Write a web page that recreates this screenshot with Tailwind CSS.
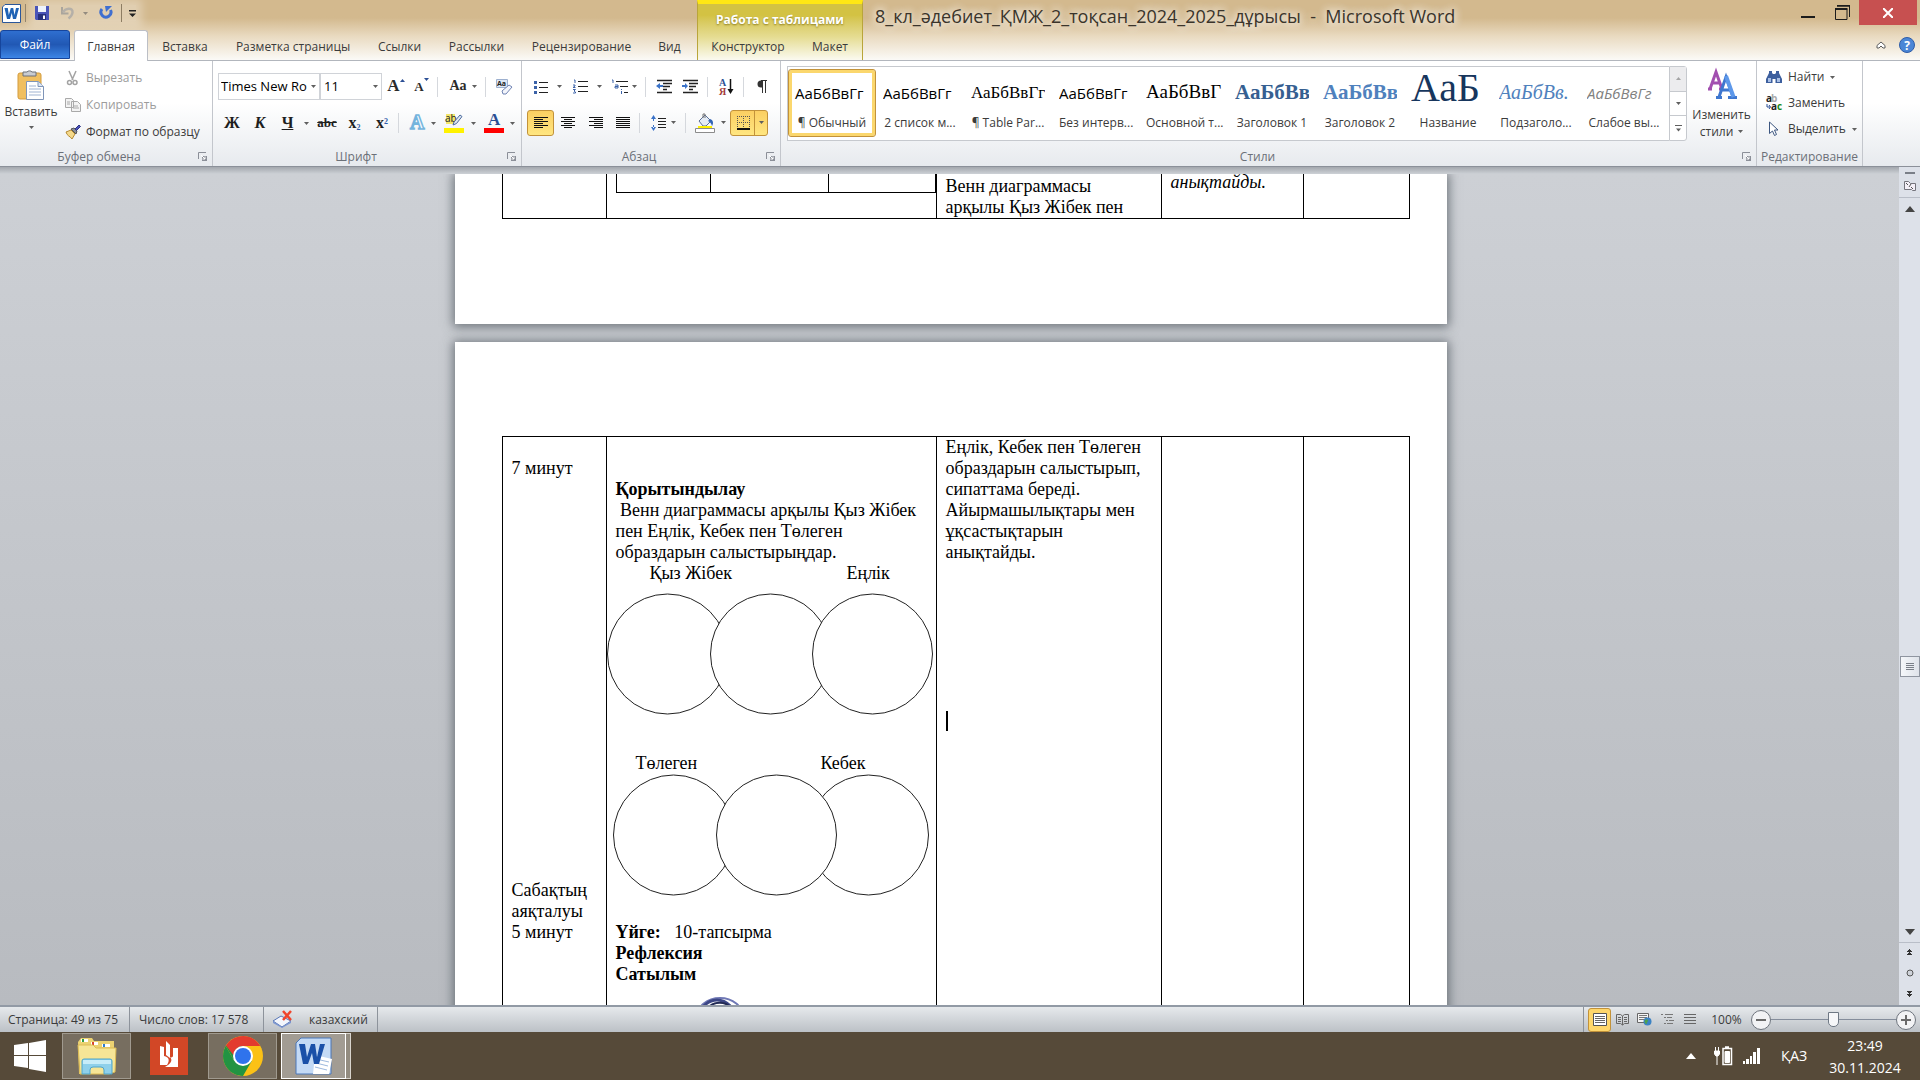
<!DOCTYPE html>
<html lang="ru">
<head>
  <meta charset="utf-8">
  <title>8_кл_әдебиет_ҚМЖ_2_тоқсан_2024_2025_дұрысы - Microsoft Word</title>
  <script src="https://cdn.jsdelivr.net/npm/@tailwindcss/browser@4"></script>
</head>
<body class="h-screen flex flex-col overflow-hidden font-['Open_Sans','Noto_Sans',sans-serif] text-xs text-[#3b3b3b] bg-[#c4c8cd]">

  <!-- shared glyphs -->
  <svg class="hidden">
    <symbol id="caret" viewBox="0 0 5 3"><path d="M0 0h5L2.500 3z" fill="#5f5f5f"/></symbol>
    <symbol id="launcher" viewBox="0 0 9 9"><path d="M.5 7V.5H8" fill="none" stroke="#8b8f98"/><path d="M4 4h5v5H4z" fill="#8b8f98"/><path d="M3 3l4 4M7 4.500V7H4.500" stroke="#fff" fill="none"/></symbol>
    <symbol id="word" viewBox="0 0 19 19"><path d="M3 .5h15.500v18H.5V3z" fill="#fff" stroke="#2b579a"/><path d="M2.500 4h3.300l1 7 2-7h2.400l1.300 7L14 4h3l-3 11h-3L9.800 9 8 15H5z" fill="#1f63b5"/></symbol>
  </svg>

  <!-- title bar and tabs -->
  <header class="flex h-[61px] shrink-0 border-b border-[#b2b6bd] bg-linear-to-b from-[#d3b98e] from-30% via-[#e9dac0] via-60% to-[#fbfaf7]">
    <div class="w-[697px] flex flex-col shrink-0">
      <div class="h-[31px] flex items-center pb-1">
        <svg class="size-[19px] ml-[2px]"><use href="#word"/></svg>
        <i class="w-px h-[18px] bg-[#8d7d63] ml-1"></i>
        <div class="flex items-center h-4 ml-[9px] bg-white/30 shadow-[0_0_8px_6px_rgba(255,255,255,.3)]">
          <button aria-label="Сохранить">
            <svg class="size-[14px]" viewBox="0 0 14 14"><path d="M0 0h14v14H1L0 13z" fill="#4a55b8"/><path d="M3 0h8v6H3z" fill="#eef3fb"/><path d="M3 8h8v6H3z" fill="#26307c"/><path d="M8 9.500h2V13H8z" fill="#fff"/></svg>
          </button>
          <button aria-label="Отменить" class="flex items-center ml-3">
            <svg class="w-[14px] h-[14px]" viewBox="0 0 14 14"><path d="M1 1v6.500h6.500" fill="none" stroke="#aaa59c" stroke-width="2"/><path d="M2 6.500C4 2 12 1 11.500 6.500 11.300 9.500 9.500 11 7.500 12.500" fill="none" stroke="#b5b0a8" stroke-width="2.500"/></svg>
            <svg class="w-[5px] h-[3px] ml-2 opacity-60"><use href="#caret"/></svg>
          </button>
          <button aria-label="Вернуть" class="ml-[11px]">
            <svg class="w-[14px] h-[14px]" viewBox="0 0 14 14"><path d="M3 3a5 5 0 1 0 8.500 1" fill="none" stroke="#3f6fd0" stroke-width="3"/><path d="M6 0h7L7 6z" fill="#3f6fd0"/></svg>
          </button>
          <i class="w-px h-[18px] bg-[#8d7d63] ml-2"></i>
          <button aria-label="Настройка панели быстрого доступа" class="ml-[7px]">
            <svg class="w-[7px] h-[7px]" viewBox="0 0 7 7"><path d="M0 0h7v1.500H0zM0 3.500h7L3.500 7z" fill="#222"/></svg>
          </button>
        </div>
      </div>
      <nav class="flex h-[30px] text-center">
        <button class="w-[70px] h-[29px] pt-px mr-1 rounded-t-[3px] border border-[#16459c] bg-linear-to-b from-[#2f6fd0] via-[#2158b4] to-[#3d86e6] text-white">Файл</button>
        <button class="w-[74px] h-[31px] pt-px rounded-t-[3px] border border-b-0 border-[#bcbfc6] bg-white z-10">Главная</button>
        <button class="w-[74px] pt-[3px]">Вставка</button>
        <button class="w-[142px] pt-[3px]">Разметка страницы</button>
        <button class="w-[71px] pt-[3px]">Ссылки</button>
        <button class="w-[83px] pt-[3px]">Рассылки</button>
        <button class="w-[127px] pt-[3px]">Рецензирование</button>
        <button class="w-[49px] pt-[3px]">Вид</button>
      </nav>
    </div>
    <div class="w-[166px] shrink-0 flex flex-col border-t-4 border-x border-t-[#ffe714] border-x-[#b9a53a] bg-linear-to-b from-[#d3c243] from-20% via-[#e6dd94] via-60% to-[#fbfaf0]">
      <div class="h-[27px] flex items-center justify-center pt-[5px] font-bold text-white [text-shadow:0_1px_2px_#8a7a1a]">Работа с таблицами</div>
      <nav class="flex h-[30px]">
        <button class="w-[100px] pt-[3px]">Конструктор</button>
        <button class="w-16 pt-[3px]">Макет</button>
      </nav>
    </div>
    <div class="flex-1 flex flex-col">
      <div class="h-[31px] flex items-start">
        <h1 class="pl-3 pt-[3px] text-[18px] leading-[26px] whitespace-nowrap text-[#3a342b] [text-shadow:0_0_10px_#fff,0_0_10px_#fff]">8_кл_әдебиет_ҚМЖ_2_тоқсан_2024_2025_дұрысы&nbsp; -&nbsp; Microsoft Word</h1>
        <button aria-label="Свернуть" class="ml-auto w-[34px] h-[25px] flex justify-center items-center"><svg class="w-[14px] h-[14px]"><path d="M0 10h14v2H0z" fill="#1c1c1c"/></svg></button>
        <button aria-label="Восстановить" class="w-[34px] h-[25px] flex justify-center items-center"><svg class="w-[15px] h-[15px]" viewBox="0 0 15 15"><path d="M2 1h12.500v11M.5 4.500h11.500v10H.5z" fill="none" stroke="#1c1c1c"/><path d="M0 3h12.500v2H0zM2 0h13v1.500H2z" fill="#1c1c1c"/></svg></button>
        <button aria-label="Закрыть" class="mr-[3px] w-[58px] h-[25px] flex justify-center items-center bg-[#c75050]"><svg class="w-[10px] h-[10px]" viewBox="0 0 10 10"><path d="M0 0l10 10M10 0L0 10" stroke="#fff" stroke-width="2"/></svg></button>
      </div>
      <div class="h-[30px] flex justify-end items-center gap-[13px] pr-[5px]">
        <button aria-label="Свернуть ленту"><svg class="w-[10px] h-[8px]" viewBox="0 0 10 8"><path d="M1 4.500L5 1l4 3.500V7H7L5 5 3 7H1z" fill="#fff" stroke="#5c5c5c"/></svg></button>
        <button aria-label="Справка" class="size-4 rounded-full border border-[#2f5da8] bg-[#4b86d6] text-white font-bold leading-[13px]">?</button>
      </div>
    </div>
  </header>

  <!-- ribbon -->
  <section class="flex h-[106px] shrink-0 border-b border-[#8b9099] bg-linear-to-b from-white from-40% to-[#e7eaee]">

    <div class="w-[213px] flex flex-col border-r border-[#c3c6cc] shrink-0">
      <div class="flex h-[86px]">
        <button class="w-[62px] flex flex-col items-center pt-2">
          <svg class="w-[28px] h-[32px]" viewBox="0 0 28 32"><rect x="1" y="4" width="23" height="26" rx="2" fill="#f0bf60" stroke="#d39b3c"/><path d="M6 3h4a3 2.500 0 0 1 5 0h4v4H6z" fill="#c9ccd1" stroke="#6d7178"/><path d="M9.500 12.500h12l5 5v13h-17z" fill="#fff" stroke="#7f95b8"/><path d="M21 12.500v5h5.500" fill="#dce6f4" stroke="#7f95b8"/><path d="M12 17h7M12 20h12M12 23h12M12 26h12" stroke="#9fb3d2"/></svg>
          <span class="leading-[16px] mt-[3px]">Вставить</span>
          <svg class="w-[5px] h-[3px] mt-[6px]"><use href="#caret"/></svg>
        </button>
        <div class="flex flex-col gap-[3px] pt-[5px] pl-[3px] items-start">
          <button class="flex items-center gap-[5px] h-6 text-[#9c9c9c]">
            <svg class="size-4" viewBox="0 0 16 16" fill="none" stroke="#a3a3a3"><path d="M4 1l4 9M11 1L7 10" stroke-width="1.500"/><circle cx="4.500" cy="12.500" r="2" stroke-width="1.500"/><circle cx="10" cy="12.500" r="2" stroke-width="1.500"/></svg>
            Вырезать</button>
          <button class="flex items-center gap-[5px] h-6 text-[#9c9c9c]">
            <svg class="size-4" viewBox="0 0 16 16" fill="#f3f3f3" stroke="#a9a9a9"><path d="M.5 1.500h6l2 2v7h-8zM6.500 4.500h6l3 3v7h-9z"/><path d="M8 9h5M8 11h6M2 5h3M2 7h3"/></svg>
            Копировать</button>
          <button class="flex items-center gap-[5px] h-6">
            <svg class="size-4" viewBox="0 0 16 16"><path d="M1 8l5-2 4 4-3 5C5 12 2 12 1 8z" fill="#f5d98a" stroke="#b48a34"/><path d="M6 5l3-1 3 3-1 3z" fill="#8a8f98" stroke="#555"/><path d="M10 5l4-4 1.500 1.500-4 4z" fill="#4a52b8" stroke="#2c3384"/></svg>
            Формат по образцу</button>
        </div>
      </div>
      <div class="flex h-[19px] pr-[5px] text-[#6b7078] items-center"><span class="flex-1 text-center">Буфер обмена</span><svg class="size-[9px]"><use href="#launcher"/></svg></div>
    </div>

    <div class="w-[309px] flex flex-col border-r border-[#c3c6cc] shrink-0">
      <div class="flex flex-col h-[86px] pl-[5px] pt-3 gap-[10px]">
        <div class="flex h-[27px] items-center">
          <div class="relative w-[102px] h-[27px]">
            <select aria-label="Шрифт" class="appearance-none w-full h-full border border-[#d0d3d8] bg-white pl-[2px] text-[13px] text-black"><option>Times New Ro</option></select>
            <svg class="absolute right-1 top-3 w-[5px] h-[3px]"><use href="#caret"/></svg>
          </div>
          <div class="relative w-[62px] h-[27px]">
            <select aria-label="Размер шрифта" class="appearance-none w-full h-full border border-[#d0d3d8] bg-white pl-[3px] text-[13px] text-black"><option>11</option></select>
            <svg class="absolute right-1 top-3 w-[5px] h-[3px]"><use href="#caret"/></svg>
          </div>
          <button class="w-[28px] font-['Liberation_Serif',serif] font-bold text-[17px] text-[#2b2b2b] flex justify-center">A<svg class="w-[5px] h-[4px] mt-1"><path d="M0 3h5L2.500 0z" fill="#2b4f95"/></svg></button>
          <button class="w-[23px] font-['Liberation_Serif',serif] font-bold text-[13px] text-[#2b2b2b] flex justify-center">A<svg class="w-[5px] h-[4px]"><path d="M0 0h5L2.500 3z" fill="#2b4f95"/></svg></button>
          <i class="w-px h-5 bg-[#d5d8dd] ml-1"></i>
          <button class="w-[28px] ml-[6px] font-['Liberation_Serif',serif] font-bold text-[14px] text-[#2b2b2b]">Aa</button>
          <svg class="w-[5px] h-[3px]"><use href="#caret"/></svg>
          <i class="w-px h-5 bg-[#d5d8dd] ml-2"></i>
          <button aria-label="Очистить формат" class="ml-[10px]"><svg class="w-[17px] h-4" viewBox="0 0 17 16"><path d="M.5.5h11v8H.5z" fill="#dfe8f5" stroke="#9db0cf"/><text x="1" y="7" font-size="7" font-weight="bold" fill="#222">Aa</text><path d="M6 12l7-6 3 2-6 7H7z" fill="#f3f5fb" stroke="#6f83b3"/></svg></button>
        </div>
        <div class="flex h-[26px] items-center font-['Liberation_Serif',serif] text-[16px] text-[#1e1e1e]">
          <button class="w-[28px] font-bold">Ж</button>
          <button class="w-[28px] font-bold italic">К</button>
          <button class="w-[27px] font-bold underline">Ч</button>
          <svg class="w-[5px] h-[3px] ml-[3px]"><use href="#caret"/></svg>
          <button class="w-[28px] ml-1 text-[13px] font-bold line-through">abc</button>
          <button class="w-[27px] text-[16px] font-bold">x<sub class="text-[8px] text-[#2b5cab]">2</sub></button>
          <button class="w-[28px] text-[16px] font-bold">x<sup class="text-[8px] text-[#2b5cab]">2</sup></button>
          <i class="w-px h-5 bg-[#d5d8dd] ml-[2px]"></i>
          <button aria-label="Текстовые эффекты" class="w-[28px] ml-1 flex justify-center"><svg class="w-[18px] h-[18px] overflow-visible"><text x="2" y="15" font-size="20" font-weight="bold" fill="#f4faff" stroke="#74b4dd" stroke-width="1.500">A</text></svg></button>
          <svg class="w-[5px] h-[3px]"><use href="#caret"/></svg>
          <button aria-label="Цвет выделения" class="ml-[8px]"><svg class="w-[20px] h-[20px]" viewBox="0 0 20 20"><path d="M2 1h9v10H2z" fill="#f3e56b"/><text x="1" y="9" font-size="10" font-family="Open Sans" fill="#222">ab</text><path d="M9 12l1-3 6-7 2 1.500-5.500 7z" fill="#dfe6f0" stroke="#4a6a9e"/><path d="M0 15h20v5H0z" fill="#fff200"/></svg></button>
          <svg class="w-[5px] h-[3px] ml-[7px]"><use href="#caret"/></svg>
          <button aria-label="Цвет текста" class="ml-2"><svg class="w-[20px] h-[20px]" viewBox="0 0 20 20"><text x="4" y="12" font-size="17" font-weight="bold" fill="#2b4f95">A</text><path d="M0 15h20v5H0z" fill="#f00"/></svg></button>
          <svg class="w-[5px] h-[3px] ml-[6px]"><use href="#caret"/></svg>
        </div>
      </div>
      <div class="flex h-[19px] pr-[5px] text-[#6b7078] items-center"><span class="flex-1 text-center pr-2">Шрифт</span><svg class="size-[9px]"><use href="#launcher"/></svg></div>
    </div>

    <div class="w-[259px] flex flex-col border-r border-[#c3c6cc] shrink-0">
      <div class="flex flex-col h-[86px] pt-3 gap-[9px]">
        <div class="flex h-[27px] items-center pl-[12px]">
          <button aria-label="Маркеры"><svg class="w-[14px] h-[14px]" viewBox="0 0 14 14"><path d="M0 1h3v3H0zM0 6h3v3H0zM0 11h3v3H0z" fill="#3b62a8"/><path d="M5 2.500h9M5 7.500h9M5 12.500h9" stroke="#222"/></svg></button>
          <svg class="w-[5px] h-[3px] ml-[9px]"><use href="#caret"/></svg>
          <button aria-label="Нумерация" class="ml-[11px]"><svg class="w-[15px] h-[15px]" viewBox="0 0 15 15"><path d="M1 1h1v3M0 6h2v1L0 8.500h2.500M0 10.500h2.500L1 12l1.500 1v1H0" fill="none" stroke="#3b62a8"/><path d="M5 2.500h10M5 7.500h10M5 12.500h10" stroke="#222"/></svg></button>
          <svg class="w-[5px] h-[3px] ml-[9px]"><use href="#caret"/></svg>
          <button aria-label="Многоуровневый список" class="ml-[9px]"><svg class="w-[17px] h-4" viewBox="0 0 17 16"><path d="M1 1h1v3M4 6h3v3H4V7.500h3M10.500 10v1M10.500 12v3" fill="none" stroke="#3b62a8"/><path d="M5 2.500h12M9 7.500h8M13 13.500h4" stroke="#222"/></svg></button>
          <svg class="w-[5px] h-[3px] ml-1"><use href="#caret"/></svg>
          <i class="w-px h-5 bg-[#d5d8dd] ml-2"></i>
          <button aria-label="Уменьшить отступ" class="ml-[10px]"><svg class="w-4 h-[15px]" viewBox="0 0 16 15"><path d="M1 1.500h15M7 4.500h9M7 7.500h7M7 10.500h4M1 13.500h15" stroke="#222" stroke-width="1.500"/><path d="M0 7l4-3v2h3v2H4v2z" fill="#3b73c8"/></svg></button>
          <button aria-label="Увеличить отступ" class="ml-[10px]"><svg class="w-4 h-[15px]" viewBox="0 0 16 15"><path d="M1 1.500h15M7 4.500h9M7 7.500h7M7 10.500h4M1 13.500h15" stroke="#222" stroke-width="1.500"/><path d="M6 7L3 4v2H0v2h3v2z" fill="#3b73c8"/></svg></button>
          <i class="w-px h-5 bg-[#d5d8dd] ml-[9px]"></i>
          <button aria-label="Сортировка" class="ml-[11px]"><svg class="w-[14px] h-4 overflow-visible" viewBox="0 0 14 16" font-size="10" font-weight="bold" font-family="Liberation Serif"><text x="0" y="7" fill="#2b4f95">А</text><text x="0" y="16" fill="#a33a3a">Я</text><path d="M11.500 0v11" stroke="#111" stroke-width="1.500"/><path d="M8.500 10h6l-3 5z" fill="#111"/></svg></button>
          <i class="w-px h-5 bg-[#d5d8dd] ml-[10px]"></i>
          <button aria-label="Знаки абзаца" class="ml-[13px]"><svg class="w-[10px] h-[13px]" viewBox="0 0 10 13"><path d="M5 .5H4a3.500 3.500 0 0 0 0 7h1z" fill="#333"/><path d="M4 .5h6M5.500 0v13M8.500 0v13" stroke="#333" fill="none"/></svg></button>
        </div>
        <div class="flex h-[27px] items-center pl-[5px]">
          <button aria-label="По левому краю" class="w-[27px] h-[26px] flex items-center justify-center rounded-[3px] border border-[#c2923a] bg-linear-to-b from-[#fbcf62] to-[#ffe680]"><svg class="w-[14px] h-3" viewBox="0 0 14 12"><path d="M0 .5h14M0 2.500h9M0 4.500h14M0 6.500h9M0 8.500h14M0 10.500h9" stroke="#111"/></svg></button>
          <button aria-label="По центру" class="ml-[7px]"><svg class="w-[14px] h-3" viewBox="0 0 14 12"><path d="M0 .5h14M3 2.500h8M0 4.500h14M3 6.500h8M0 8.500h14M3 10.500h8" stroke="#111"/></svg></button>
          <button aria-label="По правому краю" class="ml-[14px]"><svg class="w-[14px] h-3" viewBox="0 0 14 12"><path d="M0 .5h14M5 2.500h9M0 4.500h14M5 6.500h9M0 8.500h14M5 10.500h9" stroke="#111"/></svg></button>
          <button aria-label="По ширине" class="ml-[13px]"><svg class="w-[14px] h-3" viewBox="0 0 14 12"><path d="M0 .5h14M0 2.500h14M0 4.500h14M0 6.500h14M0 8.500h14M0 10.500h14" stroke="#111"/></svg></button>
          <i class="w-px h-5 bg-[#d5d8dd] ml-[9px]"></i>
          <button aria-label="Интервал" class="ml-[11px]"><svg class="w-[15px] h-4" viewBox="0 0 15 16"><path d="M0 4l2.500-4L5 4zM0 12l2.500 4L5 12zM2 3h1v3H2zM2 10h1v3H2z" fill="#3b73c8"/><path d="M7 3.500h8M7 6.500h8M7 9.500h8M7 12.500h8" stroke="#222"/></svg></button>
          <svg class="w-[5px] h-[3px] ml-[5px]"><use href="#caret"/></svg>
          <i class="w-px h-5 bg-[#d5d8dd] ml-[9px]"></i>
          <button aria-label="Заливка" class="ml-[9px]"><svg class="w-[20px] h-[20px]" viewBox="0 0 20 20"><path d="M4 8l6-6 6 6-5 5H8z" fill="#e4ebf5" stroke="#5a6f96"/><path d="M15 6c3 1 4 4 2 7-1-3-2-4-4-5z" fill="#2f63b5"/><path d="M8 5V1h2v4" fill="none" stroke="#777"/><path d="M3 13h14v2H3z" fill="#fff200"/><path d="M.5 15.500h19v4H.5z" fill="#fff" stroke="#8b8b8b"/></svg></button>
          <svg class="w-[5px] h-[3px] ml-[6px]"><use href="#caret"/></svg>
          <button aria-label="Границы" class="ml-[4px] w-[38px] h-[26px] flex items-center rounded-[3px] border border-[#c2923a] bg-linear-to-b from-[#fbcf62] to-[#ffe680]">
            <svg class="w-[13px] h-[14px] ml-[6px]" viewBox="0 0 13 14"><path d="M0 .5h13M.5 0v12M12.500 0v12M6.500 0v12M0 6.500h13" stroke="#555" stroke-dasharray="1 1"/><path d="M0 13h13" stroke="#111" stroke-width="2"/></svg>
            <i class="w-px h-full bg-[#c2923a] ml-1"></i>
            <svg class="w-[5px] h-[3px] ml-1"><use href="#caret"/></svg>
          </button>
        </div>
      </div>
      <div class="flex h-[19px] pr-[5px] text-[#6b7078] items-center"><span class="flex-1 text-center pr-[10px]">Абзац</span><svg class="size-[9px]"><use href="#launcher"/></svg></div>
    </div>

    <div class="w-[976px] flex flex-col border-r border-[#c3c6cc] shrink-0">
      <div class="flex h-[86px] pl-[6px] pt-[5px]">
        <div class="flex w-[882px] h-[75px] pt-[2px] border border-r-0 border-[#c6c9ce] bg-white text-center text-black leading-[18px]">
          <button class="w-[88px] h-[68px] px-[3px] flex flex-col rounded-[3px] border border-[#c2923a] bg-white shadow-[inset_0_0_0_3px_#fbd76d]"><span class="w-full h-10 pt-[5px] pl-[3px] overflow-hidden whitespace-nowrap text-left text-[15px] leading-[36px]">АаБбВвГг</span><span class="w-full text-[#3b3b3b] mt-1">¶ Обычный</span></button>
          <button class="w-[88px] h-[67px] px-[7px] pt-[1px] flex flex-col"><span class="w-full h-10 pt-[5px] overflow-hidden whitespace-nowrap text-left text-[15px] leading-[36px]">АаБбВвГг</span><span class="w-full text-[#3b3b3b] mt-1 whitespace-nowrap">2 список м...</span></button>
          <button class="w-[88px] h-[67px] px-[7px] pt-[1px] flex flex-col"><span class="w-full h-10 pt-[5px] overflow-hidden whitespace-nowrap text-left font-['Liberation_Serif',serif] text-[17px] leading-[36px]">АаБбВвГг</span><span class="w-full text-[#3b3b3b] mt-1 whitespace-nowrap">¶ Table Par...</span></button>
          <button class="w-[88px] h-[67px] px-[7px] pt-[1px] flex flex-col"><span class="w-full h-10 pt-[5px] overflow-hidden whitespace-nowrap text-left text-[15px] leading-[36px]">АаБбВвГг</span><span class="w-full text-[#3b3b3b] mt-1 whitespace-nowrap">Без интерв...</span></button>
          <button class="w-[88px] h-[67px] px-[6px] pt-[1px] flex flex-col"><span class="w-full h-10 pt-[4px] overflow-hidden whitespace-nowrap text-left font-['Liberation_Serif',serif] text-[19px] leading-[36px]">АаБбВвГ</span><span class="w-full text-[#3b3b3b] mt-1 whitespace-nowrap">Основной т...</span></button>
          <button class="w-[88px] h-[67px] px-[7px] pt-[1px] flex flex-col"><span class="w-full h-10 pt-[4px] overflow-hidden whitespace-nowrap text-left font-['Liberation_Serif',serif] font-bold text-[21px] leading-[36px] text-[#365f91]">АаБбВв</span><span class="w-full text-[#3b3b3b] mt-1 whitespace-nowrap">Заголовок 1</span></button>
          <button class="w-[88px] h-[67px] px-[7px] pt-[1px] flex flex-col"><span class="w-full h-10 pt-[4px] overflow-hidden whitespace-nowrap text-left font-['Liberation_Serif',serif] font-bold text-[21px] leading-[36px] text-[#4f81bd]">АаБбВв</span><span class="w-full text-[#3b3b3b] mt-1 whitespace-nowrap">Заголовок 2</span></button>
          <button class="w-[88px] h-[67px] px-[7px] pt-[1px] flex flex-col"><span class="w-full h-10 overflow-hidden whitespace-nowrap text-left font-['Liberation_Serif',serif] text-[40px] leading-[36px] text-[#17365d]">АаБ</span><span class="w-full text-[#3b3b3b] mt-1 whitespace-nowrap">Название</span></button>
          <button class="w-[88px] h-[67px] px-[7px] pt-[1px] flex flex-col"><span class="w-full h-10 pt-[4px] overflow-hidden whitespace-nowrap text-left font-['Liberation_Serif',serif] italic text-[20px] leading-[36px] text-[#4f81bd]">АаБбВв.</span><span class="w-full text-[#3b3b3b] mt-1 whitespace-nowrap">Подзаголо...</span></button>
          <button class="w-[88px] h-[67px] px-[7px] pt-[1px] flex flex-col"><span class="w-full h-10 pt-[5px] overflow-hidden whitespace-nowrap text-left italic text-[15px] leading-[36px] text-[#808080]">АаБбВвГг</span><span class="w-full text-[#3b3b3b] mt-1 whitespace-nowrap">Слабое вы...</span></button>
        </div>
        <div class="flex flex-col w-[18px] h-[75px] border border-[#c6c9ce] rounded-r-[3px] divide-y divide-[#c6c9ce] bg-white">
          <button aria-label="Вверх" class="flex-1 flex items-center justify-center bg-[#ececee]"><svg class="w-[5px] h-[3px] rotate-180 opacity-50"><use href="#caret"/></svg></button>
          <button aria-label="Вниз" class="flex-1 flex items-center justify-center"><svg class="w-[5px] h-[3px]"><use href="#caret"/></svg></button>
          <button aria-label="Дополнительно" class="flex-1 flex items-center justify-center"><svg class="w-[7px] h-[7px]" viewBox="0 0 7 7"><path d="M0 0h7v1H0zM1 3.500h5L3.500 6.500z" fill="#5f5f5f"/></svg></button>
        </div>
        <button class="flex-1 flex flex-col items-center leading-[17px]">
          <svg class="w-[30px] h-[32px] mt-1 overflow-visible" viewBox="0 0 30 32" fill="none"><path d="M1 19h4M12 19h3M3 19L9 2l6 17M5.500 13h7" stroke="#a24fb0" stroke-width="3"/><path d="M9 27.500h6M21 27.500h9M12 27L19 7l7 20M14.500 20h9" stroke="#3e77cf" stroke-width="3"/><path d="M19 6l7.500 21" stroke="#5d98ea" stroke-width="4"/></svg>
          <span class="mt-1">Изменить</span>
          <span class="flex items-center gap-[5px]">стили <svg class="w-[5px] h-[3px]"><use href="#caret"/></svg></span>
        </button>
      </div>
      <div class="flex h-[19px] pr-[5px] text-[#6b7078] items-center"><span class="flex-1 text-center pr-2">Стили</span><svg class="size-[9px]"><use href="#launcher"/></svg></div>
    </div>

    <div class="w-[106px] flex flex-col border-r border-[#c3c6cc] shrink-0">
      <div class="flex flex-col h-[86px] pl-[9px] pt-1 gap-[2px] items-start">
        <button class="flex items-center gap-[6px] h-6">
          <svg class="size-4" viewBox="0 0 16 16"><path d="M3 2h3v2l1 1h2l1-1V2h3v2l3 6v4H9.500v-4h-3v4H0v-4l3-6z" fill="#3d5f9e"/><path d="M2 9h3v4H2zM11 9h3v4h-3z" fill="#a9c0e6"/></svg>
          Найти <svg class="w-[5px] h-[3px]"><use href="#caret"/></svg></button>
        <button class="flex items-center gap-[6px] h-6">
          <svg class="w-4 h-4 overflow-visible" viewBox="0 0 16 16" font-size="10" font-weight="bold"><text x="0" y="7" fill="#222">a</text><text x="5" y="7" fill="#aaa">b</text><text x="5" y="15" fill="#222">a</text><text x="11" y="15" fill="#1a8a1a">c</text><path d="M1 9v3h3M3 10l1.500 2L3 14" fill="none" stroke="#2b4f95"/></svg>
          Заменить</button>
        <button class="flex items-center gap-[6px] h-6">
          <svg class="size-4" viewBox="0 0 16 16"><path d="M3.500 1v11.500l3-2.500 2 4.500 2-1-2-4.500h3.500z" fill="#fff" stroke="#3d5680"/></svg>
          Выделить <svg class="w-[5px] h-[3px]"><use href="#caret"/></svg></button>
      </div>
      <div class="flex h-[19px] text-[#6b7078] items-center justify-center">Редактирование</div>
    </div>
  </section>

  <!-- document -->
  <main class="flex flex-1 min-h-0">
    <div class="flex-1 flex flex-col min-w-0">
      <div class="h-[7px] shrink-0 bg-linear-to-b from-[#a3a7ad] to-[#cdd1d6]"></div>
      <div class="flex-1 min-h-0 pl-[2px] overflow-hidden bg-linear-to-b from-[#cdd0d5] to-[#b8bbc0] font-['Liberation_Serif','Times_New_Roman',serif] text-[18px] leading-[21px] text-black">
        <article class="w-[992px] h-[150px] mx-auto bg-white px-[47px] shadow-[0_1px_10px_2px_rgba(80,88,95,.75)]">
          <table class="table-fixed border-collapse w-[908px]">
            <colgroup><col class="w-[104px]"><col class="w-[330px]"><col class="w-[225px]"><col class="w-[142px]"><col class="w-[106px]"></colgroup>
            <tr class="align-top">
              <td class="h-[44px] border border-t-0 border-black p-0"></td>
              <td class="border border-t-0 border-black p-0 pl-[9px]">
                <div class="flex h-[19px] border border-t-0 border-black divide-x divide-black">
                  <div class="w-[94px]"></div><div class="w-[118px]"></div><div class="flex-1"></div>
                </div>
              </td>
              <td class="border border-t-0 border-black p-0 pt-[2px] px-[9px] whitespace-nowrap">Венн диаграммасы<br>арқылы Қыз Жібек пен</td>
              <td class="border border-t-0 border-black p-0 px-[9px] italic leading-[16px]">анықтайды.</td>
              <td class="border border-t-0 border-black p-0"></td>
            </tr>
          </table>
        </article>

        <article class="w-[992px] h-[900px] mx-auto mt-[18px] bg-white px-[47px] pt-[94px] shadow-[0_1px_10px_2px_rgba(80,88,95,.75)]">
          <table class="table-fixed border-collapse w-[908px] h-[780px]">
            <colgroup><col class="w-[104px]"><col class="w-[330px]"><col class="w-[225px]"><col class="w-[142px]"><col class="w-[106px]"></colgroup>
            <tr class="align-top">
              <td class="border border-black p-0 px-[9px] pt-[21px]">
                <p>7 минут</p>
                <p class="mt-[401px]">Сабақтың аяқталуы</p>
                <p>5 минут</p>
              </td>
              <td class="border border-black p-0 pt-[42px] whitespace-nowrap">
                <p class="px-[9px] font-bold">Қорытындылау</p>
                <p class="px-[9px]">&nbsp;Венн диаграммасы арқылы Қыз Жібек<br>пен Еңлік, Кебек пен Төлеген<br>образдарын салыстырыңдар.</p>
                <p class="flex pl-[43px]"><span class="w-[197px]">Қыз Жібек</span><span>Еңлік</span></p>
                <svg class="block w-full h-[169px]" fill="#fff" stroke="#222">
                  <circle cx="60.500" cy="70" r="60"/><circle cx="163.500" cy="70" r="60"/><circle cx="265.500" cy="70" r="60"/>
                </svg>
                <p class="flex pl-[29px]"><span class="w-[185px]">Төлеген</span><span>Кебек</span></p>
                <svg class="block w-full h-[148px]" fill="#fff" stroke="#222">
                  <circle cx="66.500" cy="61" r="60"/><circle cx="261.500" cy="61" r="60"/><circle cx="169.500" cy="61" r="60"/>
                </svg>
                <p class="px-[9px]"><b>Үйге:</b>&nbsp;&nbsp; 10-тапсырма</p>
                <p class="px-[9px] font-bold">Рефлексия</p>
                <p class="px-[9px] font-bold">Сатылым</p>
                <svg class="block w-[50px] h-[40px] ml-[88px] mt-3" viewBox="0 0 50 40" fill="none"><ellipse cx="25" cy="20" rx="23" ry="19" stroke="#6f78b5" stroke-width="2"/><ellipse cx="22" cy="22" rx="18" ry="19" stroke="#3d4785" stroke-width="3"/><path d="M10 14C18 3 32 3 38 14" stroke="#222a55" stroke-width="2"/></svg>
              </td>
              <td class="border border-black p-0 px-[9px] whitespace-nowrap">
                <p>Еңлік, Кебек пен Төлеген<br>образдарын салыстырып,<br>сипаттама береді.<br>Айырмашылықтары мен<br>ұқсастықтарын<br>анықтайды.</p>
                <i class="block w-[2px] h-5 mt-[148px] bg-black"></i>
              </td>
              <td class="border border-black p-0"></td>
              <td class="border border-black p-0"></td>
            </tr>
          </table>
        </article>
      </div>
    </div>

    <div class="w-[21px] shrink-0 flex flex-col items-center bg-[#dde1e9]">
      <i class="w-[10px] h-[2px] mt-[5px] bg-[#7a7f88]"></i>
      <button aria-label="Линейка" class="mt-[6px]"><svg class="block w-[13px] h-3" viewBox="0 0 13 12"><path d="M1.500 1.500h4l2 2h5v7h-3l-1-1h-7z" fill="#f4f0f8" stroke="#74747c"/><path d="M3 3l2 2M8 7l2 2M8 4l-2 3" stroke="#555"/></svg></button>
      <i class="w-full h-px mt-[5px] bg-[#b9bec8]"></i>
      <button aria-label="Прокрутить вверх" class="mt-2"><svg class="block w-[10px] h-[6px]"><path d="M0 6h10L5 0z" fill="#444"/></svg></button>
      <button aria-label="Ползунок" class="mt-[444px] w-5 h-[21px] shrink-0 border border-[#8f95a0] bg-linear-to-r from-[#f5f7fa] to-[#dfe3ea] flex items-center justify-center"><svg class="w-2 h-2"><path d="M0 .5h8M0 2.500h8M0 4.500h8M0 6.500h8" stroke="#7a7f88"/></svg></button>
      <button aria-label="Прокрутить вниз" class="mt-auto"><svg class="block w-[10px] h-[6px]"><path d="M0 0h10L5 6z" fill="#444"/></svg></button>
      <i class="w-full h-px mt-[7px] bg-[#b9bec8]"></i>
      <button aria-label="Предыдущая страница" class="mt-[6px]"><svg class="block w-[5px] h-[6px]"><path d="M2 0h1v6H2zM1 1h3v1H1zM0 2h5v1H0zM1 4h3v1H1zM0 5h5v1H0z" fill="#333"/></svg></button>
      <button aria-label="Выбор объекта" class="mt-[14px]"><svg class="block w-2 h-2"><circle cx="4" cy="4" r="3" fill="#cfd3da" stroke="#555"/></svg></button>
      <button aria-label="Следующая страница" class="mt-[14px] mb-2"><svg class="block w-[5px] h-[6px]"><path d="M2 0h1v6H2zM0 0h5v1H0zM1 1h3v1H1zM0 3h5v1H0zM1 4h3v1H1z" fill="#333"/></svg></button>
    </div>
  </main>

  <!-- status bar -->
  <footer class="flex h-[27px] shrink-0 items-center border-t-2 border-[#929aa5] bg-linear-to-b from-[#e6e9ec] to-[#bcc1c6]">
    <span class="w-[129px] pl-2">Страница: 49 из 75</span><i class="w-px h-full bg-[#8d939b]"></i>
    <span class="w-[133px] pl-[9px]">Число слов: 17 578</span><i class="w-px h-full bg-[#8d939b]"></i>
    <button aria-label="Правописание" class="ml-2"><svg class="w-[21px] h-[19px]" viewBox="0 0 21 19"><path d="M1 11l8-5 10 5-9 6z" fill="#f3f6fc" stroke="#5473b5"/><path d="M1 11v2l9 5 9-5v-2l-9 6z" fill="#7d97d0"/><path d="M11 1l8 9M19 1l-8 9" stroke="#f0452c" stroke-width="2.500"/></svg></button>
    <button class="ml-4 w-[68px] text-left">казахский</button><i class="w-px h-full bg-[#8d939b]"></i>
    <i class="ml-auto w-px h-full bg-[#8d939b]"></i>
    <button aria-label="Разметка страницы" class="ml-1 w-[23px] h-6 flex items-center justify-center rounded-[3px] border border-[#c2923a] bg-[#ffd76b]"><svg class="w-[14px] h-[13px]"><path d="M.5.5h13v12H.5z" fill="#fff" stroke="#555"/><path d="M2 3.500h10M2 5.500h10M2 7.500h10M2 9.500h10" stroke="#666"/></svg></button>
    <button aria-label="Режим чтения" class="ml-[5px]"><svg class="w-[13px] h-[13px]" fill="none" stroke="#666"><path d="M.5 1.500h4l2 1.500 2-1.500h4v9h-4l-2 1.500-2-1.500h-4zM6.500 3v9M2 4.500h3M2 6.500h3M2 8.500h3M8 4.500h3M8 6.500h3M8 8.500h3"/></svg></button>
    <button aria-label="Веб-документ" class="ml-2"><svg class="w-[15px] h-[13px]"><path d="M.5.5h11v9H.5z" fill="#f4f4f4" stroke="#666"/><path d="M2 2.500h8M2 4.500h8M2 6.500h5" stroke="#777"/><circle cx="10.500" cy="8.500" r="4" fill="#3b82c4"/><path d="M8 7c2-2 3 0 3 1s-2 1-1 3c-2 0-3-2-2-4z" fill="#4fa34a"/></svg></button>
    <button aria-label="Структура" class="ml-[9px]"><svg class="w-[13px] h-3" stroke="#777"><path d="M0 .5h2M4 .5h8M3 3.500h2M6 3.500h5M5 6.500h2M8 6.500h5M3 9.500h2M6 9.500h6"/></svg></button>
    <button aria-label="Черновик" class="ml-[10px]"><svg class="w-3 h-3" stroke="#666"><path d="M0 .5h12M0 3.500h12M0 6.500h12M0 9.500h12"/></svg></button>
    <button class="ml-[15px] w-[31px]">100%</button>
    <button aria-label="Уменьшить" class="ml-[9px] size-5 rounded-full border border-[#6e747d] bg-[#f2f3f5] flex items-center justify-center"><i class="w-[10px] h-[2px] bg-[#6a6a6a]"></i></button>
    <input type="range" aria-label="Масштаб" value="50" class="w-[125px] h-4 appearance-none bg-transparent [&::-webkit-slider-runnable-track]:h-px [&::-webkit-slider-runnable-track]:bg-[#848d9b] [&::-webkit-slider-thumb]:appearance-none [&::-webkit-slider-thumb]:w-[11px] [&::-webkit-slider-thumb]:h-[15px] [&::-webkit-slider-thumb]:-mt-[7px] [&::-webkit-slider-thumb]:bg-[#f6f7f9] [&::-webkit-slider-thumb]:border [&::-webkit-slider-thumb]:border-[#6e7884] [&::-webkit-slider-thumb]:rounded-b-[5px]">
    <button aria-label="Увеличить" class="mr-1 size-5 rounded-full border border-[#6e747d] bg-[#f2f3f5] flex items-center justify-center"><svg class="size-[10px]"><path d="M4 0h2v4h4v2H6v4H4V6H0V4h4z" fill="#6a6a6a"/></svg></button>
  </footer>

  <!-- taskbar -->
  <footer class="flex h-12 shrink-0 items-center bg-[#564a39] text-white text-[14px]">
    <button aria-label="Пуск" class="ml-[14px]"><svg class="block w-8 h-8" viewBox="0 0 32 32" fill="#fff"><path d="M0 5l14-2v12H0zM15 3l17-3v15H15zM0 16h14v12L0 26zM15 16h17v16l-17-3z"/></svg></button>
    <button aria-label="Проводник" class="ml-4 w-[69px] h-[46px] flex items-center justify-center border border-[#a09a8f] bg-[#776e60]">
      <svg class="w-10 h-10" viewBox="0 0 40 40"><path d="M1 6l3-4h11l2 3h20v31l-4 2H2z" fill="#ecd272"/><path d="M4 3h7v3H4zM14 6h7v3h-7zM25 8h8v3h-8z" fill="#fff"/><path d="M5 3h2v3H5z" fill="#2f9e44"/><path d="M15 6h2v3h-2z" fill="#d9432f"/><path d="M26 8h2v3h-2z" fill="#2f7fd1"/><path d="M1 9h15l3 3h20l-1 24-6 2H3z" fill="#f6e596" stroke="#dcbb55"/><path d="M5 25q0-2 2-2h26q2 0 2 2v13h-8v-4q0-3-3-3h-8q-3 0-3 3v4H5z" fill="#8fd0ea" stroke="#4fa5cb"/><path d="M6 24h28v4H6z" fill="#c7ecf8"/></svg>
    </button>
    <button aria-label="Читалка" class="ml-[19px]"><svg class="block w-[38px] h-[38px]" viewBox="0 0 38 38"><path d="M0 0h38v38H0z" fill="#d24726"/><path d="M10 9l4 1v9c5 1 6 4 3 9h-7zM16 4l4 4v13l-4-3zM23 11h5v19H15c6-3 8-7 5-10 1 1 3 0 3-1z" fill="#fff"/></svg></button>
    <button aria-label="Chrome" class="ml-5 w-[69px] h-[46px] flex items-center justify-center border border-[#a09a8f] bg-[#776e60]">
      <svg class="w-10 h-10" viewBox="0 0 40 40"><circle cx="20" cy="20" r="20" fill="#fbc116"/><path d="M2.700 10A20 20 0 0 0 20 40l8.700-15L20 20l-8.700 5z" fill="#229342"/><path d="M2.700 10L11.300 25 20 20V10z" fill="#229342"/><path d="M3 9.600L11 20a9 9 0 0 1 9-10h17.300A20 20 0 0 0 3 9.600z" fill="#e33b2e"/><circle cx="20" cy="20" r="10" fill="#fff"/><circle cx="20" cy="20" r="8" fill="#2f73ec"/></svg>
    </button>
    <button aria-label="Word" class="ml-1 w-[65px] h-[46px] flex items-center justify-center border border-white bg-[#a29c93]">
      <svg class="w-[38px] h-[38px]" viewBox="0 0 38 38"><path d="M6 1h30v36H1V6z" fill="#c4daf5" stroke="#4a76b8"/><path d="M20 18l17 4-3 15H18z" fill="#fff"/><path d="M21 22l13 3M21 26l12 3M20 30l12 3" stroke="#9db9de"/><path d="M4 7h6l2 13 4-13h4l2 13 3-13h5l-6 20h-5l-2-11-4 11H8z" fill="#1a50a8"/></svg>
    </button>
    <i class="w-[5px] h-[46px] border border-l-0 border-[#d8d4cd] bg-[#938c80]"></i>
    <button aria-label="Скрытые значки" class="ml-auto"><svg class="block w-[10px] h-[6px]"><path d="M0 6h10L5 0z" fill="#fff"/></svg></button>
    <svg class="ml-[18px] w-[19px] h-5" viewBox="0 0 19 20" fill="none" stroke="#fff"><path d="M1.500 1v4M4.500 1v4M3 9v10"/><path d="M.5 5h5v3l-1.500 2h-2L.5 8z" fill="#fff"/><path d="M9 2.500h8.500v16H9zM11 1h4" stroke-width="1.500"/><path d="M11 5.500h4.500v11H11z" fill="#fff"/></svg>
    <svg class="ml-[10px] w-[17px] h-4" fill="#fff"><path d="M0 13h2v3H0zM3 11h3v5H3zM7 8h2v8H7zM10 4h3v12h-3zM14 0h3v16h-3z"/></svg>
    <span class="ml-[21px] w-[30px]">ҚАЗ</span>
    <time class="w-[90px] ml-[9px] mr-[10px] pt-[2px] text-center leading-[22px]">23:49<br>30.11.2024</time>
  </footer>
</body>
</html>
